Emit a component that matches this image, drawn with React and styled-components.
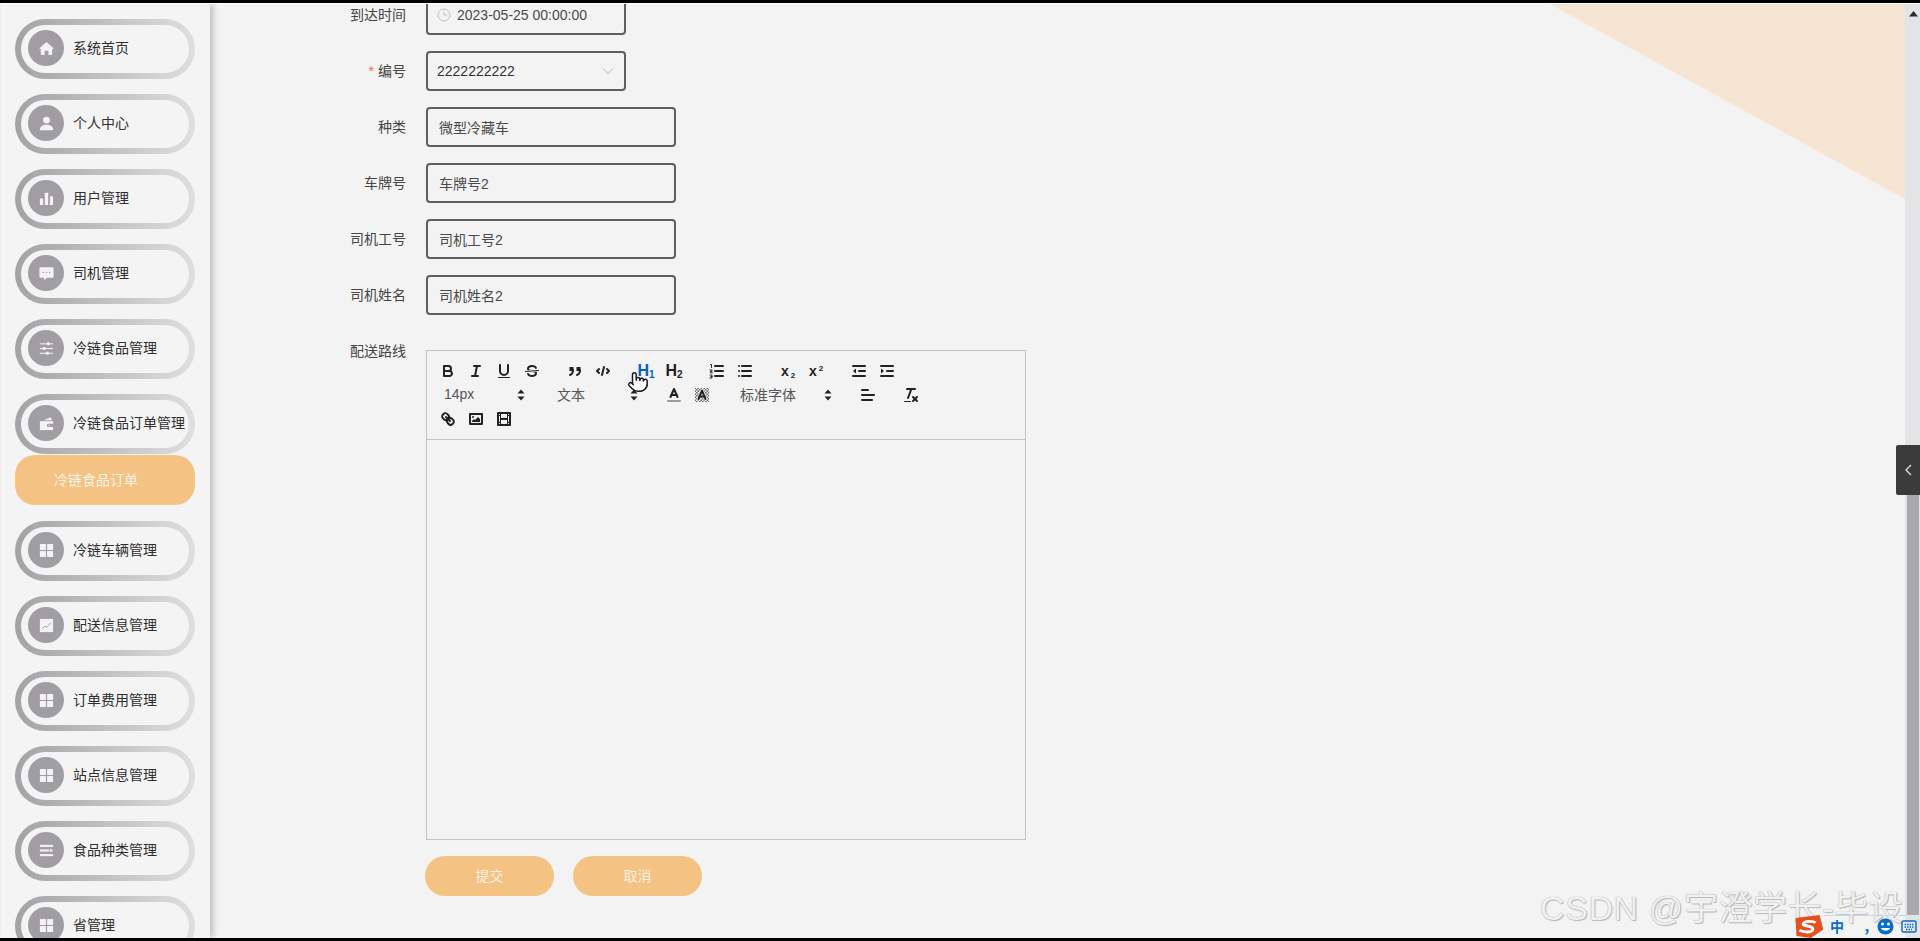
import React from "react";
import styled, { createGlobalStyle } from "styled-components";
import { Pointer } from "lucide-react";

const GlobalStyle = createGlobalStyle`
  html, body {
    margin: 0;
    padding: 0;
    overflow: hidden;
    background: #000;
  }
  * {
    box-sizing: border-box;
  }
  body {
    font-family: "Liberation Sans", "Noto Sans CJK SC", sans-serif;
  }
`;

const Shell = styled.div`
  position: relative;
  width: 1920px;
  height: 941px;
  display: flex;
  flex-direction: column;
  overflow: hidden;
  background: #f3f3f3;
`;

const TopEdge = styled.div`
  flex: 0 0 4px;
  background: #000;
  border-bottom: 1px solid #fff;
`;

const BottomEdge = styled.div`
  flex: 0 0 3px;
  background: #000;
`;

const Body = styled.div`
  flex: 1;
  min-height: 0;
  display: flex;
  overflow: hidden;
`;

const Sidebar = styled.aside`
  position: relative;
  z-index: 2;
  flex: 0 0 209px;
  margin-left: 1px;
  padding: 15px 0 0 14px;
  display: flex;
  flex-direction: column;
  gap: 15px;
  background: #f4f4f5;
  box-shadow: 3px 0 6px rgba(0, 0, 0, 0.22);
  overflow: hidden;
`;

const MenuGroup = styled.div`
  flex: 0 0 auto;
  display: flex;
  flex-direction: column;
`;

const Pill = styled.div`
  height: 60px;
  width: 180px;
  display: flex;
  align-items: center;
  gap: 9px;
  padding: 0 0 2px 7px;
  border: 6px solid transparent;
  border-radius: 30px;
  background:
    linear-gradient(#f4f4f5, #f4f4f5) padding-box,
    linear-gradient(90deg, #a3a3a5, #dfdee1) border-box;
  color: #2f2f2f;
  font-size: 14px;
  white-space: nowrap;
`;

const PillLabel = styled.span`
  margin-bottom: 2px;
`;

const Dot = styled.span`
  flex: 0 0 36px;
  height: 36px;
  border-radius: 50%;
  background: #a09ea2;
  color: #f3f3f3;
  display: flex;
  align-items: center;
  justify-content: center;

  svg {
    width: 17px;
    height: 17px;
  }
`;

const SubLink = styled.div`
  height: 50px;
  width: 180px;
  margin: 1px 0;
  padding: 0 0 2px 39px;
  display: flex;
  align-items: center;
  border-radius: 20px;
  background: #f4c282;
  color: #f8f1e6;
  font-size: 14px;
`;

const Main = styled.main`
  position: relative;
  flex: 1;
  min-width: 0;
  background: #f3f3f3;
  overflow: hidden;
`;

const Corner = styled.div`
  position: absolute;
  top: 0;
  right: 0;
  width: 355px;
  height: 195px;
  background: #f5e5d2;
  clip-path: polygon(0 0, 100% 0, 100% 100%);
`;

const Form = styled.form`
  position: relative;
  margin-top: -9px;
  padding-left: 76px;
  display: flex;
  flex-direction: column;
  gap: 16px;
`;

const Row = styled.div`
  display: flex;
  align-items: flex-start;
  gap: 20px;
`;

const Label = styled.label`
  flex: 0 0 120px;
  text-align: right;
  line-height: 40px;
  font-size: 14px;
  color: #444;
`;

const Star = styled.span`
  color: #f56c6c;
  margin-right: 4px;
`;

const Field = styled.div`
  width: ${(p) => p.$width || 250}px;
  height: 40px;
  display: flex;
  align-items: center;
  gap: ${(p) => p.$gap || 0}px;
  padding: 0 ${(p) => p.$pad || 12}px 0 ${(p) => p.$padLeft || 11}px;
  border: 2px solid #5f5f5f;
  border-radius: 4px;
  font-size: 14px;
  color: ${(p) => p.$color || "#4a4a4a"};
  justify-content: ${(p) => (p.$between ? "space-between" : "flex-start")};
`;

const Editor = styled.div`
  width: 600px;
  margin-top: 19px;
  border: 1px solid #c4c4c4;
`;

const Toolbar = styled.div`
  display: flex;
  flex-wrap: wrap;
  padding: 8px 7px;
  border-bottom: 1px solid #c4c4c4;
`;

const ToolGroup = styled.span`
  display: inline-flex;
  margin-right: 15px;
  height: 24px;
`;

const ToolButton = styled.span`
  width: 28px;
  height: 24px;
  display: flex;
  align-items: center;
  justify-content: center;
  color: ${(p) => (p.$active ? "#0660c4" : "#222")};
  font-size: ${(p) => p.$size || 16}px;
  font-weight: 700;
  line-height: 1;

  svg {
    width: 18px;
    height: 18px;
    fill: none;
    stroke: currentColor;
    stroke-width: 2;
    stroke-linecap: round;
    stroke-linejoin: round;
  }
  svg .f {
    fill: currentColor;
    stroke: none;
  }
  svg .t {
    stroke-width: 1;
  }
  sub,
  sup {
    font-size: ${(p) => (p.$size ? 8 : 10)}px;
    line-height: 0;
    position: static;
    vertical-align: ${(p) => (p.$up ? "5px" : "-2px")};
    margin-left: ${(p) => (p.$gapScript ? 2 : 0)}px;
  }
`;

const ToolSelect = styled.span`
  width: ${(p) => p.$width}px;
  height: 24px;
  padding: 0 2px 2px ${(p) => p.$pad || 10}px;
  display: flex;
  align-items: center;
  justify-content: space-between;
  font-size: 14px;
  color: #555;

  svg {
    width: 18px;
    height: 18px;
    margin-bottom: -2px;
  }
`;

const EditArea = styled.div`
  height: 399px;
`;

const Actions = styled.div`
  display: flex;
  gap: 19px;
  margin-left: 139px;
`;

const Action = styled.button`
  width: 129px;
  height: 40px;
  padding: 0 0 2px;
  border: 0;
  border-radius: 20px;
  background: #f4c282;
  color: #f8f1e6;
  font: inherit;
  font-size: 14px;
`;

const Scrollbar = styled.div`
  flex: 0 0 15px;
  position: relative;
  z-index: 1;
  padding: 0 1px 0 2px;
  display: flex;
  flex-direction: column;
  align-items: stretch;
  background: #e4e3e6;
`;

const ScrollArrow = styled.span`
  flex: 0 0 487px;
  padding-top: 7px;
  display: flex;
  justify-content: center;
`;

const ScrollThumb = styled.span`
  flex: 0 0 424px;
  background: #a9a8aa;
`;

const DrawerTab = styled.div`
  position: absolute;
  z-index: 3;
  top: 445px;
  right: 0;
  width: 24px;
  height: 50px;
  display: flex;
  align-items: center;
  padding-left: 8px;
  border-radius: 2px 0 0 2px;
  background: #3b3b3b;
  color: #e0e0e0;
`;

const Watermark = styled.div`
  position: absolute;
  z-index: 4;
  left: 1540px;
  top: 896px;
  font-size: 34px;
  line-height: 24px;
  letter-spacing: 0.6px;
  white-space: nowrap;
  color: #f1f1f1;
  text-shadow: 0 0 1px #8f8f8f, 1px 1px 1px #bcbcbc;
`;

const ImeBar = styled.div`
  position: absolute;
  z-index: 5;
  left: 1792px;
  top: 915px;
  width: 128px;
  height: 23px;
  display: flex;
  align-items: center;
  color: #0a6ccf;
`;

const ImeLine = styled.span`
  position: absolute;
  top: 0;
  left: 32px;
  width: 83px;
  height: 1px;
  background: #c3d8ea;
`;

const ImeText = styled.span`
  font-size: 14px;
  font-weight: 700;
  line-height: 1;
  margin-left: ${(p) => p.$left}px;
`;

const ImeIcon = styled.svg`
  flex: 0 0 auto;
  margin-left: ${(p) => p.$left || 0}px;
`;

const Cursor = styled.div`
  position: absolute;
  z-index: 6;
  left: 627px;
  top: 371px;
  width: 22px;
  height: 22px;
  color: #1a1a1a;

  svg {
    fill: #fff;
    display: block;
  }
`;

const Solid = ({ children }) => (
  <svg width="18" height="18" viewBox="0 0 18 18" fill="currentColor">
    {children}
  </svg>
);

const HomeIcon = () => (
  <Solid>
    <path d="M9 2 1.800 8.600c-.4.4-.1.9.3.9H3v5.700c0 .5.4.8.8.8H7v-4.600h4V16h3.200c.4 0 .8-.3.8-.8V9.500h.9c.4 0 .7-.5.3-.9z" />
  </Solid>
);

const UserIcon = () => (
  <Solid>
    <circle cx="9" cy="5.400" r="3.600" />
    <path d="M2 15.200c0-3.200 2.800-5 7-5s7 1.800 7 5c0 .6-.4.9-1 .9H3c-.6 0-1-.3-1-.9z" />
  </Solid>
);

const BarsIcon = () => (
  <Solid>
    <rect x="2" y="9" width="3.400" height="7" rx=".4" />
    <rect x="7.200" y="3" width="3.600" height="13" rx=".4" />
    <rect x="12.600" y="6.500" width="3.400" height="9.500" rx=".4" />
  </Solid>
);

const ChatIcon = () => (
  <Solid>
    <path d="M2.500 2.500h13c.6 0 1 .4 1 1v9c0 .6-.4 1-1 1H9.500L6.500 16.500v-3h-4c-.6 0-1-.4-1-1v-9c0-.6.4-1 1-1z" />
    <g fill="#a09ea2">
      <circle cx="5.600" cy="8" r=".8" />
      <circle cx="9" cy="8" r=".8" />
      <circle cx="12.400" cy="8" r=".8" />
    </g>
  </Solid>
);

const SliderIcon = () => (
  <Solid>
    <rect x="2" y="3.500" width="14" height="1.100" />
    <rect x="2" y="8.500" width="14" height="1.100" />
    <rect x="2" y="13.500" width="14" height="1.100" />
    <rect x="9.500" y="2.400" width="3" height="3.200" rx="1" />
    <rect x="5" y="7.400" width="3" height="3.200" rx="1" />
    <rect x="8.500" y="12.400" width="3" height="3.200" rx="1" />
  </Solid>
);

const WalletIcon = () => (
  <Solid>
    <path d="M2 6.500h14V16H2z" />
    <path d="M6 5.600 13.600 2.400l1 3.200z" />
    <path d="M11 9.300h5v3.400h-5a1.700 1.700 0 0 1 0-3.400z" fill="#a09ea2" />
    <circle cx="12" cy="11" r=".8" />
  </Solid>
);

const GridIcon = () => (
  <Solid>
    <rect x="2" y="2" width="6.400" height="6.400" rx=".6" />
    <rect x="9.600" y="2" width="6.400" height="6.400" rx=".6" />
    <rect x="2" y="9.600" width="6.400" height="6.400" rx=".6" />
    <rect x="9.600" y="9.600" width="6.400" height="6.400" rx=".6" />
  </Solid>
);

const ChartIcon = () => (
  <Solid>
    <rect x="2" y="2" width="14" height="14" />
    <path d="M4.500 12.500 7.500 9.500l1.600 1.400L13.500 6" fill="none" stroke="#a09ea2" strokeWidth="1" />
  </Solid>
);

const ListIcon = () => (
  <Solid>
    <rect x="2" y="3" width="14" height="2.200" />
    <rect x="2" y="7.900" width="10" height="2.200" />
    <path d="M13 7 16 9l-3 2z" />
    <rect x="2" y="12.800" width="14" height="2.200" />
  </Solid>
);

const ClockIcon = () => (
  <svg width="14" height="14" viewBox="0 0 14 14" fill="none" stroke="#bfc2c9" strokeWidth="1">
    <circle cx="7" cy="7" r="6" />
    <path d="M7 3.500V7h3" />
  </svg>
);

const ChevronDown = () => (
  <svg width="14" height="14" viewBox="0 0 14 14" fill="none" stroke="#b4b7be" strokeWidth="1">
    <path d="M2 4.500 7 9.500l5-5" />
  </svg>
);

const UpDown = () => (
  <svg viewBox="0 0 18 18" fill="#222">
    <polygon points="5.500 7.500 9 3.500 12.500 7.500" />
    <polygon points="5.500 10.500 9 14.500 12.500 10.500" />
  </svg>
);

const menus = [
  { label: "系统首页", icon: <HomeIcon /> },
  { label: "个人中心", icon: <UserIcon /> },
  { label: "用户管理", icon: <BarsIcon /> },
  { label: "司机管理", icon: <ChatIcon /> },
  { label: "冷链食品管理", icon: <SliderIcon /> },
  { label: "冷链食品订单管理", icon: <WalletIcon />, sub: "冷链食品订单" },
  { label: "冷链车辆管理", icon: <GridIcon /> },
  { label: "配送信息管理", icon: <ChartIcon /> },
  { label: "订单费用管理", icon: <GridIcon /> },
  { label: "站点信息管理", icon: <GridIcon /> },
  { label: "食品种类管理", icon: <ListIcon /> },
  { label: "省管理", icon: <GridIcon /> },
];

const fields = [
  { label: "种类", value: "微型冷藏车" },
  { label: "车牌号", value: "车牌号2" },
  { label: "司机工号", value: "司机工号2" },
  { label: "司机姓名", value: "司机姓名2" },
];

const QuillToolbar = () => (
  <Toolbar>
    <ToolGroup>
      <ToolButton>
        <svg viewBox="0 0 18 18">
          <path d="M5,4H9.500A2.500,2.500,0,0,1,12,6.500v0A2.500,2.500,0,0,1,9.500,9H5V4Z" />
          <path d="M5,9h5.500A2.500,2.500,0,0,1,13,11.500v0A2.500,2.500,0,0,1,10.500,14H5V9Z" />
        </svg>
      </ToolButton>
      <ToolButton>
        <svg viewBox="0 0 18 18">
          <line x1="7" x2="13" y1="4" y2="4" />
          <line x1="5" x2="11" y1="14" y2="14" />
          <line x1="8" x2="10" y1="14" y2="4" />
        </svg>
      </ToolButton>
      <ToolButton>
        <svg viewBox="0 0 18 18">
          <path d="M5,3V9a4,4,0,0,0,4,4H9a4,4,0,0,0,4-4V3" />
          <rect className="f" x="3" y="15" width="12" height="1" rx=".5" />
        </svg>
      </ToolButton>
      <ToolButton>
        <svg viewBox="0 0 18 18">
          <line className="t" x1="15.500" x2="2.500" y1="8.500" y2="9.500" />
          <path className="f" d="M9,8C6.500,7.800,6,7.500,6,6.500,6,5.800,7.300,5,9,5c1.600,0,2.800.7,3,1.300a1,1,0,0,0,1.900-.6C13.400,4.100,11.400,3,9,3,6.200,3,4,4.500,4,6.500a3.200,3.200,0,0,0,.5,1.800Z" />
          <path className="f" d="M9,10c2.500.2,3,.5,3,1.500,0,.7-1.300,1.500-3,1.500-1.600,0-2.800-.7-3-1.300a1,1,0,1,0-1.900.6C4.600,13.900,6.600,15,9,15c2.800,0,5-1.500,5-3.500a3.200,3.200,0,0,0-.5-1.800Z" />
        </svg>
      </ToolButton>
    </ToolGroup>
    <ToolGroup>
      <ToolButton>
        <svg viewBox="0 0 18 18">
          <rect className="f" x="3.500" y="5" width="4" height="4" />
          <rect className="f" x="10.500" y="5" width="4" height="4" />
          <path d="M7,8c0,4-3,5-3,5" />
          <path d="M14,8c0,4-3,5-3,5" />
        </svg>
      </ToolButton>
      <ToolButton>
        <svg viewBox="0 0 18 18">
          <polyline points="5 7 3 9 5 11" />
          <polyline points="13 7 15 9 13 11" />
          <line x1="10" x2="8" y1="5" y2="13" />
        </svg>
      </ToolButton>
    </ToolGroup>
    <ToolGroup>
      <ToolButton $active>
        <span>H<sub>1</sub></span>
      </ToolButton>
      <ToolButton>
        <span>H<sub>2</sub></span>
      </ToolButton>
    </ToolGroup>
    <ToolGroup>
      <ToolButton>
        <svg viewBox="0 0 18 18">
          <line x1="7" x2="15" y1="4" y2="4" />
          <line x1="7" x2="15" y1="9" y2="9" />
          <line x1="7" x2="15" y1="14" y2="14" />
          <path className="t" d="M2.500 2.500h1v3M2 8h2v1.400H2.400v1.400h2M2 13h2v3H2M2.800 14.500H4" />
        </svg>
      </ToolButton>
      <ToolButton>
        <svg viewBox="0 0 18 18">
          <line x1="6" x2="15" y1="4" y2="4" />
          <line x1="6" x2="15" y1="9" y2="9" />
          <line x1="6" x2="15" y1="14" y2="14" />
          <line x1="3" x2="3" y1="4" y2="4" />
          <line x1="3" x2="3" y1="9" y2="9" />
          <line x1="3" x2="3" y1="14" y2="14" />
        </svg>
      </ToolButton>
    </ToolGroup>
    <ToolGroup>
      <ToolButton $size={14} $gapScript>
        <span>x<sub>2</sub></span>
      </ToolButton>
      <ToolButton $size={14} $up $gapScript>
        <span>x<sup>2</sup></span>
      </ToolButton>
    </ToolGroup>
    <ToolGroup>
      <ToolButton>
        <svg viewBox="0 0 18 18">
          <line x1="3" x2="15" y1="14" y2="14" />
          <line x1="3" x2="15" y1="4" y2="4" />
          <line x1="9" x2="15" y1="9" y2="9" />
          <polygon className="f" points="6 6.500 6 11.500 3 9" />
        </svg>
      </ToolButton>
      <ToolButton>
        <svg viewBox="0 0 18 18">
          <line x1="3" x2="15" y1="14" y2="14" />
          <line x1="3" x2="15" y1="4" y2="4" />
          <line x1="9" x2="15" y1="9" y2="9" />
          <polygon className="f" points="3 6.500 3 11.500 6 9" />
        </svg>
      </ToolButton>
    </ToolGroup>
    <ToolGroup>
      <ToolSelect $width={98}>
        14px
        <UpDown />
      </ToolSelect>
    </ToolGroup>
    <ToolGroup>
      <ToolSelect $width={98}>
        文本
        <UpDown />
      </ToolSelect>
    </ToolGroup>
    <ToolGroup>
      <ToolButton>
        <svg viewBox="0 0 18 18">
          <line x1="3" x2="15" y1="15" y2="15" stroke="#9a9a9a" />
          <polyline points="5.500 11 9 3 12.500 11" />
          <line x1="11.630" x2="6.380" y1="9" y2="9" />
        </svg>
      </ToolButton>
      <ToolButton>
        <svg viewBox="0 0 18 18">
          <defs>
            <pattern id="hatch" width="3" height="3" patternUnits="userSpaceOnUse">
              <rect width="1.500" height="1.500" fill="#666" stroke="none" />
              <rect x="1.500" y="1.500" width="1.500" height="1.500" fill="#666" stroke="none" />
            </pattern>
          </defs>
          <rect x="2" y="2" width="14" height="14" fill="url(#hatch)" stroke="none" />
          <polyline points="5.500 13 9 4.500 12.500 13" stroke="#f3f3f3" strokeWidth="3.500" />
          <polyline points="5.500 13 9 4.500 12.500 13" />
          <line x1="11.630" x2="6.380" y1="10.500" y2="10.500" />
        </svg>
      </ToolButton>
    </ToolGroup>
    <ToolGroup>
      <ToolSelect $width={108} $pad={9}>
        标准字体
        <UpDown />
      </ToolSelect>
    </ToolGroup>
    <ToolGroup>
      <ToolButton>
        <svg viewBox="0 0 18 18">
          <line x1="3" x2="15" y1="9" y2="9" />
          <line x1="3" x2="13" y1="14" y2="14" />
          <line x1="3" x2="9" y1="4" y2="4" />
        </svg>
      </ToolButton>
    </ToolGroup>
    <ToolGroup>
      <ToolButton>
        <svg viewBox="0 0 18 18">
          <line x1="5" x2="13" y1="3" y2="3" />
          <line x1="6" x2="9.350" y1="12" y2="3" />
          <line x1="11" x2="15" y1="11" y2="15" />
          <line x1="15" x2="11" y1="11" y2="15" />
          <rect className="f" x="2" y="15" width="7" height="1" rx=".5" />
        </svg>
      </ToolButton>
    </ToolGroup>
    <ToolGroup>
      <ToolButton>
        <svg viewBox="0 0 18 18">
          <line x1="7" x2="11" y1="7" y2="11" />
          <path d="M8.900,4.577a3.476,3.476,0,0,1,.36,4.679A3.476,3.476,0,0,1,4.577,8.900C3.185,7.500,2.035,6.400,4.217,4.217S7.500,3.185,8.900,4.577Z" />
          <path d="M13.423,9.100a3.476,3.476,0,0,0-4.679-.36,3.476,3.476,0,0,0,.36,4.679c1.392,1.392,2.500,2.542,4.679.36S14.815,10.500,13.423,9.100Z" />
        </svg>
      </ToolButton>
      <ToolButton>
        <svg viewBox="0 0 18 18">
          <rect width="12" height="10" x="3" y="4" />
          <circle className="f" cx="6" cy="7" r="1" />
          <polyline className="f" points="5 12 5 11 7 9 8 10 11 7 13 9 13 12 5 12" />
        </svg>
      </ToolButton>
      <ToolButton>
        <svg viewBox="0 0 18 18">
          <rect width="12" height="12" x="3" y="3" />
          <rect className="f" width="1" height="12" x="5" y="3" />
          <rect className="f" width="1" height="12" x="12" y="3" />
          <rect className="f" width="8" height="2" x="5" y="8" />
          <rect className="f" width="3" height="1" x="3" y="5" />
          <rect className="f" width="3" height="1" x="3" y="12" />
          <rect className="f" width="3" height="1" x="12" y="5" />
          <rect className="f" width="3" height="1" x="12" y="12" />
        </svg>
      </ToolButton>
    </ToolGroup>
  </Toolbar>
);

export default function App() {
  return (
    <Shell>
      <GlobalStyle />
      <TopEdge />
      <Body>
        <Sidebar>
          {menus.map((m) => (
            <MenuGroup key={m.label}>
              <Pill>
                <Dot>{m.icon}</Dot>
                <PillLabel>{m.label}</PillLabel>
              </Pill>
              {m.sub && <SubLink>{m.sub}</SubLink>}
            </MenuGroup>
          ))}
        </Sidebar>
        <Main>
          <Corner />
          <Form>
            <Row>
              <Label>到达时间</Label>
              <Field $width={200} $gap={6} $padLeft={9}>
                <ClockIcon />
                2023-05-25 00:00:00
              </Field>
            </Row>
            <Row>
              <Label>
                <Star>*</Star>编号
              </Label>
              <Field $width={200} $padLeft={9} $pad={9} $color="#333" $between>
                2222222222
                <ChevronDown />
              </Field>
            </Row>
            {fields.map((f) => (
              <Row key={f.label}>
                <Label>{f.label}</Label>
                <Field>{f.value}</Field>
              </Row>
            ))}
            <Row>
              <Label>配送路线</Label>
              <Editor>
                <QuillToolbar />
                <EditArea />
              </Editor>
            </Row>
            <Actions>
              <Action type="button">提交</Action>
              <Action type="button">取消</Action>
            </Actions>
          </Form>
        </Main>
        <Scrollbar>
          <ScrollArrow>
            <svg width="9" height="6" viewBox="0 0 9 6" fill="#2a2a2a">
              <polygon points="4.500 0 9 5.500 0 5.500" />
            </svg>
          </ScrollArrow>
          <ScrollThumb />
        </Scrollbar>
      </Body>
      <BottomEdge />
      <DrawerTab>
        <svg width="10" height="14" viewBox="0 0 10 14" fill="none" stroke="currentColor" strokeWidth="1.300">
          <path d="M7 2 2 7l5 5" />
        </svg>
      </DrawerTab>
      <Cursor>
        <Pointer size={22} strokeWidth={1.6} />
      </Cursor>
      <Watermark>CSDN @宇澄学长-毕设</Watermark>
      <ImeBar>
        <ImeLine />
        <ImeIcon width="32" height="23" viewBox="0 0 32 24">
          <path d="M3 3 28 0l4 15-13 9L4 22z" fill="#e6501c" />
          <path d="M24 8c-3-2-12-2-13 1s11 2 10 6-10 3-14 1" fill="none" stroke="#fff" strokeWidth="3" />
        </ImeIcon>
        <ImeText $left={6}>中</ImeText>
        <ImeText $left={19}>，</ImeText>
        <ImeIcon width="17" height="17" viewBox="0 0 17 17">
          <circle cx="8.500" cy="8.500" r="8" fill="#0a6ccf" />
          <circle cx="5.500" cy="6" r="1.500" fill="#fff" />
          <circle cx="11.500" cy="6" r="1.500" fill="#fff" />
          <path d="M4 10c1 3.500 8 3.500 9 0" fill="#fff" />
        </ImeIcon>
        <ImeIcon $left={7} width="16" height="14" viewBox="0 0 16 14" fill="none" stroke="#0a6ccf" strokeWidth="1.500">
          <rect x="1" y="1" width="14" height="11" rx="1.500" />
          <path d="M3.500 4.500h9M3.500 7h9M5 9.500h6" strokeDasharray="1.500 1" />
        </ImeIcon>
      </ImeBar>
    </Shell>
  );
}
